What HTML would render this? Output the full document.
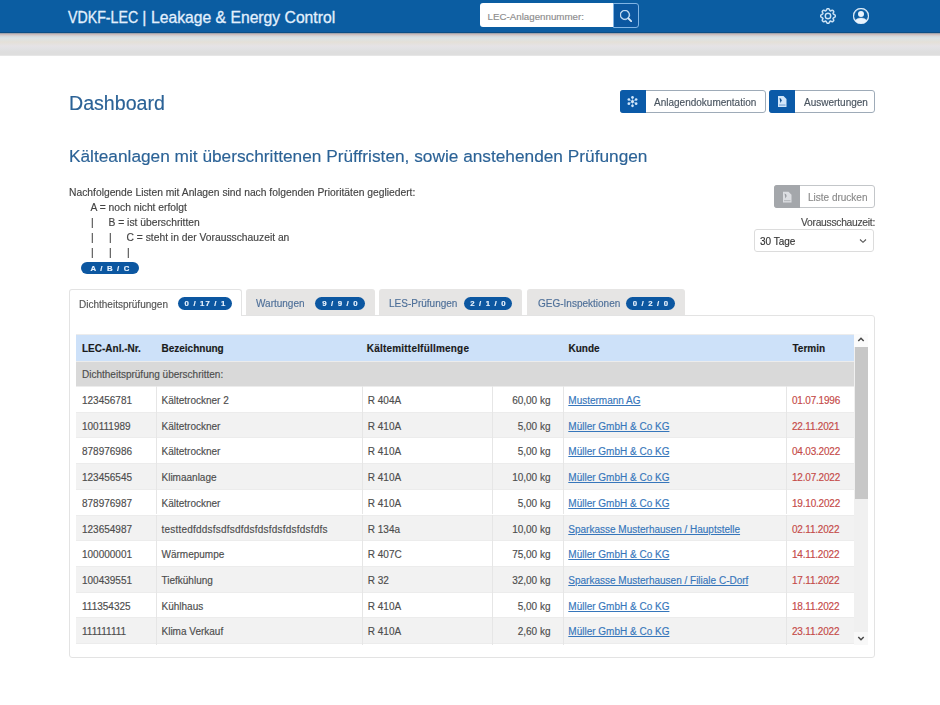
<!DOCTYPE html>
<html><head><meta charset="utf-8">
<style>
*{box-sizing:border-box;margin:0;padding:0}
html,body{width:940px;height:705px;overflow:hidden;background:#fff}
body{font-family:"Liberation Sans",sans-serif;color:#444;position:relative;-webkit-text-stroke:0.15px}
.abs{position:absolute;white-space:nowrap}
#hdr{position:absolute;left:0;top:0;width:940px;height:33px;background:#0b5da2;border-bottom:1px solid #0a4e86}
#band{position:absolute;left:0;top:33px;width:940px;height:23px;background:linear-gradient(#8a98a6 0px,#cbbdbd 1.5px,#d3d6d9 3px,#dae3e6 5px,#e4e0d8 9px,#e5e3e6 13px,#e1e1e3 16px,#dedede 19px,#dedede 22px,#eeeeee 23px)}
.title{left:68px;top:8px;font-size:15.9px;color:#e2f0fd;line-height:20px;transform-origin:0 0;-webkit-text-stroke:0.3px #e2f0fd}
#search{left:480px;top:3px;width:134px;height:24px;background:#fff;border-radius:3px 0 0 3px}
#search span{position:absolute;left:7.5px;top:7.5px;font-size:9.75px;color:#8c8c8c}
#sbtn{left:613px;top:3px;width:26px;height:24.5px;border:1px solid #80b4e4;border-radius:0 3px 3px 0;background:#0b57a0}
h1{position:absolute;left:69px;top:91px;font-size:19.6px;font-weight:normal;color:#2b6296;line-height:24px;white-space:nowrap}
.btn{position:absolute;height:23px;border:1px solid #9eabb8;border-radius:3px;background:#fff}
.btn .ic{position:absolute;left:-1px;top:-1px;width:26px;height:23px;background:#0b5aa8;border-radius:3px 0 0 3px}
.btn .tx{position:absolute;top:6px;font-size:10px;color:#4a5560;white-space:nowrap}
h2{position:absolute;left:69px;top:144.5px;font-size:17.28px;font-weight:normal;color:#2b6296;line-height:22px;white-space:nowrap}
.t{position:absolute;font-size:10.3px;color:#444;white-space:nowrap;line-height:12px}
.badge{position:absolute;background:#0c57a1;color:#eaf4ff;font-weight:bold;font-size:7.8px;border-radius:7px;text-align:center;line-height:14px;height:12.5px;white-space:nowrap;letter-spacing:1.15px;text-indent:1px}
.tab{position:absolute;top:289px;height:26px;background:#e6e5e4;border-radius:3px 3px 0 0}
.tab .tx{position:absolute;top:9px;font-size:10px;color:#4f7099;white-space:nowrap}
#panel{position:absolute;left:68.5px;top:314.5px;width:806px;height:343.5px;border:1px solid #e3e3e3;border-radius:0 3px 3px 3px;background:#fff}
#tab1{position:absolute;left:69px;top:289px;width:173px;height:27px;background:#fff;border:1px solid #e3e3e3;border-bottom:none;border-radius:3px 3px 0 0}
#tbl{position:absolute;left:76px;top:334px;width:778px;height:311px;overflow:hidden}
.row{position:absolute;left:0;width:778px;height:25.7px;box-shadow:inset 0 1px 0 #ececec}
.cell{position:absolute;top:0;height:100%;font-size:10px;color:#4d4d4d;white-space:nowrap;line-height:29px;border-left:1px solid #e6e6e6}
.c1{left:0;width:80px;padding-left:6px;border-left:none}
.c2{left:80px;width:206px;padding-left:4.5px}
.c3{left:286px;width:130px;padding-left:4.8px}
.c4{left:416px;width:71px;text-align:right;padding-right:12.5px}
.c5{left:487px;width:222.5px;padding-left:4.3px}
.c6{left:709.5px;width:68.5px;padding-left:5.5px}
.c5 a{color:#3676bb;text-decoration:underline}
.c6{color:#c54a48;letter-spacing:-0.2px}
.hd .cell{font-weight:bold;color:#1a1a1a;border-left:none}
#scroll{position:absolute;left:854px;top:334px;width:13.5px;height:311px;background:linear-gradient(#fbfbfb 0,#fbfbfb 13px,#f0f0f0 13px,#f0f0f0 298px,#f8f8f8 298px)}
#thumb{position:absolute;left:854.5px;top:347px;width:13px;height:151.5px;background:#c7c7c7}
</style></head><body><div id="wrap" style="position:absolute;left:0;top:0;width:940px;height:705px;filter:blur(0.35px)">
<div id="hdr"></div>
<div id="band"></div>
<div class="abs title" style="left:68px;transform:scaleX(0.893)">VDKF-LEC</div><div class="abs title" style="left:142.2px;transform:none">|</div><div class="abs title" style="left:150.8px;transform:scaleX(0.988)">Leakage &amp; Energy Control</div>
<div id="search" class="abs"><span>LEC-Anlagennummer:</span></div>
<div id="sbtn" class="abs"><svg style="position:absolute;left:6px;top:5.5px" width="12" height="12" viewBox="0 0 16 16" fill="#d7eafa"><path stroke="#d7eafa" stroke-width="0.7" d="M11.742 10.344a6.5 6.5 0 1 0-1.397 1.398h-.001c.03.04.062.078.098.115l3.85 3.85a1 1 0 0 0 1.415-1.414l-3.85-3.85a1.007 1.007 0 0 0-.115-.1zM12 6.5a5.5 5.5 0 1 1-11 0 5.5 5.5 0 0 1 11 0z"/></svg></div>
<svg class="abs" style="left:820px;top:8px" width="16" height="16" viewBox="0 0 16 16" fill="#d8ebfb"><path d="M8 4.754a3.246 3.246 0 1 0 0 6.492 3.246 3.246 0 0 0 0-6.492zM5.754 8a2.246 2.246 0 1 1 4.492 0 2.246 2.246 0 0 1-4.492 0z" stroke="#d8ebfb" stroke-width=".4"/><path stroke="#d8ebfb" stroke-width=".5" d="M9.796 1.343c-.527-1.790-3.065-1.790-3.592 0l-.094.319a.873.873 0 0 1-1.255.52l-.292-.16c-1.640-.892-3.433.902-2.540 2.541l.159.292a.873.873 0 0 1-.52 1.255l-.319.094c-1.790.527-1.790 3.065 0 3.592l.319.094a.873.873 0 0 1 .52 1.255l-.16.292c-.892 1.640.901 3.434 2.541 2.540l.292-.159a.873.873 0 0 1 1.255.52l.094.319c.527 1.790 3.065 1.790 3.592 0l.094-.319a.873.873 0 0 1 1.255-.52l.292.16c1.640.893 3.434-.902 2.540-2.541l-.159-.292a.873.873 0 0 1 .52-1.255l.319-.094c1.790-.527 1.790-3.065 0-3.592l-.319-.094a.873.873 0 0 1-.52-1.255l.16-.292c.893-1.640-.902-3.433-2.541-2.540l-.292.159a.873.873 0 0 1-1.255-.52l-.094-.319zm-2.633.283c.246-.835 1.428-.835 1.674 0l.094.319a1.873 1.873 0 0 0 2.693 1.115l.291-.16c.764-.415 1.600.42 1.184 1.185l-.159.292a1.873 1.873 0 0 0 1.116 2.692l.318.094c.835.246.835 1.428 0 1.674l-.319.094a1.873 1.873 0 0 0-1.115 2.693l.16.291c.415.764-.42 1.600-1.185 1.184l-.291-.159a1.873 1.873 0 0 0-2.693 1.116l-.094.318c-.246.835-1.428.835-1.674 0l-.094-.319a1.873 1.873 0 0 0-2.692-1.115l-.292.16c-.764.415-1.600-.42-1.184-1.185l.159-.291A1.873 1.873 0 0 0 1.945 8.930l-.319-.094c-.835-.246-.835-1.428 0-1.674l.319-.094A1.873 1.873 0 0 0 3.060 4.377l-.16-.292c-.415-.764.42-1.600 1.185-1.184l.292.159a1.873 1.873 0 0 0 2.692-1.115l.094-.319z"/></svg>
<svg class="abs" style="left:853px;top:8px" width="16" height="16" viewBox="0 0 16 16" fill="#e8f3fd"><path d="M11 6a3 3 0 1 1-6 0 3 3 0 0 1 6 0z"/><path fill-rule="evenodd" stroke="#e8f3fd" stroke-width=".4" d="M0 8a8 8 0 1 1 16 0A8 8 0 0 1 0 8zm8-7a7 7 0 0 0-5.468 11.37C3.242 11.226 4.805 10 8 10s4.757 1.225 5.468 2.37A7 7 0 0 0 8 1z"/></svg>

<h1>Dashboard</h1>
<div class="btn" style="left:620px;top:90px;width:146px"><div class="ic"><svg width="26" height="23" viewBox="0 0 26 23" style="position:absolute;left:0;top:0"><g stroke="#8dbbe8" stroke-width=".7"><line x1="12.5" y1="11.6" x2="12.50" y2="7.40"/><line x1="12.5" y1="11.6" x2="16.14" y2="9.50"/><line x1="12.5" y1="11.6" x2="16.14" y2="13.70"/><line x1="12.5" y1="11.6" x2="12.50" y2="15.80"/><line x1="12.5" y1="11.6" x2="8.86" y2="13.70"/><line x1="12.5" y1="11.6" x2="8.86" y2="9.50"/></g><circle cx="12.50" cy="7.40" r="1.35" fill="#cfe5fb"/><circle cx="16.14" cy="9.50" r="1.35" fill="#cfe5fb"/><circle cx="16.14" cy="13.70" r="1.35" fill="#cfe5fb"/><circle cx="12.50" cy="15.80" r="1.35" fill="#cfe5fb"/><circle cx="8.86" cy="13.70" r="1.35" fill="#cfe5fb"/><circle cx="8.86" cy="9.50" r="1.35" fill="#cfe5fb"/><circle cx="12.5" cy="11.6" r="1.5" fill="#dde9f5"/></svg></div><div class="tx" style="left:33px">Anlagendokumentation</div></div>
<div class="btn" style="left:769px;top:90px;width:106px"><div class="ic"><svg width="26" height="23" viewBox="0 0 26 23" style="position:absolute;left:0;top:0"><path d="M9 6 h5.5 l3 3 v8 h-8.5 z" fill="#d2e6fa"/><path d="M10.5 8 q2 0 2.2 2.5 l-1.2 2.5 z" fill="#0d4d8e"/><rect x="10" y="14.3" width="6.5" height="1.5" fill="#8fb6df"/></svg></div><div class="tx" style="left:34px">Auswertungen</div></div>

<h2>Kälteanlagen mit überschrittenen Prüffristen, sowie anstehenden Prüfungen</h2>

<div class="t" style="left:69px;top:187px">Nachfolgende Listen mit Anlagen sind nach folgenden Prioritäten gegliedert:</div>
<div class="t" style="left:90.5px;top:202px">A = noch nicht erfolgt</div>
<div class="t" style="left:91px;top:217px">|</div><div class="t" style="left:108.5px;top:217px">B = ist überschritten</div>
<div class="t" style="left:91px;top:232px">|</div><div class="t" style="left:109px;top:232px">|</div><div class="t" style="left:126.5px;top:232px">C = steht in der Vorausschauzeit an</div>
<div class="t" style="left:91px;top:247px">|</div><div class="t" style="left:109px;top:247px">|</div><div class="t" style="left:127px;top:247px">|</div>
<div class="badge" style="left:81px;top:261.5px;width:58px;height:12px;line-height:13.5px">A / B / C</div>

<div class="btn" style="left:774px;top:185px;width:101px;height:23px;border-color:#c3c6c9"><div class="ic" style="background:#a4a7ab"><svg width="26" height="23" viewBox="0 0 26 23" style="position:absolute;left:0;top:0"><path d="M9 6.8 h5.5 l3 3 v7.7 h-8.5 z" fill="#dcdee2"/><path d="M10.5 8.5 q2 0 2.2 2.5 l-1.2 2.5 z" fill="#9b9ea3"/><rect x="10" y="15" width="6.5" height="1.2" fill="#b9bcc0"/></svg></div><div class="tx" style="left:33px;color:#8a8a8a">Liste drucken</div></div>
<div class="t" style="left:775px;width:100px;text-align:right;top:217px;font-size:10.3px;letter-spacing:-0.28px;color:#4a4a4a">Vorausschauzeit:</div>
<div class="abs" style="left:754px;top:228.5px;width:120px;height:23px;border:1px solid #dcdcdc;border-radius:3px"><span style="position:absolute;left:5px;top:6px;font-size:10px;color:#333">30 Tage</span><svg style="position:absolute;left:103px;top:8px" width="10" height="6" viewBox="0 0 10 6"><path d="M2 1.5 L5 4.3 L8 1.5" fill="none" stroke="#555" stroke-width="1.1"/></svg></div>

<div id="panel"></div>
<div id="tab1"><div class="tx" style="position:absolute;left:9px;top:9px;font-size:10px;color:#555">Dichtheitsprüfungen</div></div>
<div class="badge" style="left:178px;top:297px;width:54px">0 / 17 / 1</div>
<div class="tab" style="left:246px;width:129px"><div class="tx" style="left:10px">Wartungen</div></div>
<div class="badge" style="left:315px;top:297px;width:50px">9 / 9 / 0</div>
<div class="tab" style="left:379px;width:143px"><div class="tx" style="left:10px">LES-Prüfungen</div></div>
<div class="badge" style="left:464px;top:297px;width:48px">2 / 1 / 0</div>
<div class="tab" style="left:527px;width:158px"><div class="tx" style="left:11px">GEG-Inspektionen</div></div>
<div class="badge" style="left:626px;top:297px;width:49px">0 / 2 / 0</div>

<div id="tbl">
 <div class="row hd" style="top:0;height:27px;background:#cde1f9">
  <div class="cell c1" style="line-height:29px">LEC-Anl.-Nr.</div><div class="cell c2" style="line-height:29px;padding-left:5.5px">Bezeichnung</div><div class="cell c3" style="line-height:29px;letter-spacing:0.2px">Kältemittelfüllmenge</div><div class="cell c4"></div><div class="cell c5" style="line-height:29px;padding-left:5.5px">Kunde</div><div class="cell c6" style="line-height:29px;color:#1a1a1a;letter-spacing:0;padding-left:7px">Termin</div>
 </div>
 <div class="row" style="top:27px;height:25px;background:#d9d9d9"><div class="cell c1" style="width:300px;line-height:27px">Dichtheitsprüfung überschritten:</div></div>
 <div class="row" style="top:52px;background:#fff"><div class="cell c1">123456781</div><div class="cell c2">Kältetrockner 2</div><div class="cell c3">R 404A</div><div class="cell c4">60,00 kg</div><div class="cell c5"><a>Mustermann AG</a></div><div class="cell c6">01.07.1996</div></div>
 <div class="row" style="top:77.7px;background:#f2f2f2"><div class="cell c1">100111989</div><div class="cell c2">Kältetrockner</div><div class="cell c3">R 410A</div><div class="cell c4">5,00 kg</div><div class="cell c5"><a>Müller GmbH &amp; Co KG</a></div><div class="cell c6">22.11.2021</div></div>
 <div class="row" style="top:103.4px;background:#fff"><div class="cell c1">878976986</div><div class="cell c2">Kältetrockner</div><div class="cell c3">R 410A</div><div class="cell c4">5,00 kg</div><div class="cell c5"><a>Müller GmbH &amp; Co KG</a></div><div class="cell c6">04.03.2022</div></div>
 <div class="row" style="top:129.1px;background:#f2f2f2"><div class="cell c1">123456545</div><div class="cell c2">Klimaanlage</div><div class="cell c3">R 410A</div><div class="cell c4">10,00 kg</div><div class="cell c5"><a>Müller GmbH &amp; Co KG</a></div><div class="cell c6">12.07.2022</div></div>
 <div class="row" style="top:154.8px;background:#fff"><div class="cell c1">878976987</div><div class="cell c2">Kältetrockner</div><div class="cell c3">R 410A</div><div class="cell c4">5,00 kg</div><div class="cell c5"><a>Müller GmbH &amp; Co KG</a></div><div class="cell c6">19.10.2022</div></div>
 <div class="row" style="top:180.5px;background:#f2f2f2"><div class="cell c1">123654987</div><div class="cell c2" style="letter-spacing:0.22px">testtedfddsfsdfsdfdsfdsfdsfdsfdsfdfs</div><div class="cell c3">R 134a</div><div class="cell c4">10,00 kg</div><div class="cell c5"><a>Sparkasse Musterhausen / Hauptstelle</a></div><div class="cell c6">02.11.2022</div></div>
 <div class="row" style="top:206.2px;background:#fff"><div class="cell c1">100000001</div><div class="cell c2">Wärmepumpe</div><div class="cell c3">R 407C</div><div class="cell c4">75,00 kg</div><div class="cell c5"><a>Müller GmbH &amp; Co KG</a></div><div class="cell c6">14.11.2022</div></div>
 <div class="row" style="top:231.9px;background:#f2f2f2"><div class="cell c1">100439551</div><div class="cell c2">Tiefkühlung</div><div class="cell c3">R 32</div><div class="cell c4">32,00 kg</div><div class="cell c5"><a>Sparkasse Musterhausen / Filiale C-Dorf</a></div><div class="cell c6">17.11.2022</div></div>
 <div class="row" style="top:257.6px;background:#fff"><div class="cell c1">111354325</div><div class="cell c2">Kühlhaus</div><div class="cell c3">R 410A</div><div class="cell c4">5,00 kg</div><div class="cell c5"><a>Müller GmbH &amp; Co KG</a></div><div class="cell c6">18.11.2022</div></div>
 <div class="row" style="top:283.3px;background:#f2f2f2"><div class="cell c1">111111111</div><div class="cell c2">Klima Verkauf</div><div class="cell c3">R 410A</div><div class="cell c4">2,60 kg</div><div class="cell c5"><a>Müller GmbH &amp; Co KG</a></div><div class="cell c6">23.11.2022</div></div>
 <div class="row" style="top:309px;background:#fff"><div class="cell c1"></div><div class="cell c2"></div><div class="cell c3"></div><div class="cell c4"></div><div class="cell c5"></div><div class="cell c6"></div></div>
</div>
<div id="scroll"></div>
<div id="thumb"></div>
<svg class="abs" style="left:856px;top:336px" width="10" height="7" viewBox="0 0 10 7"><path d="M2.3 5 L5 2.3 L7.7 5" fill="none" stroke="#484848" stroke-width="1.5"/></svg>
<svg class="abs" style="left:856px;top:635px" width="10" height="7" viewBox="0 0 10 7"><path d="M2.3 2 L5 4.7 L7.7 2" fill="none" stroke="#484848" stroke-width="1.5"/></svg>
</div></body></html>
